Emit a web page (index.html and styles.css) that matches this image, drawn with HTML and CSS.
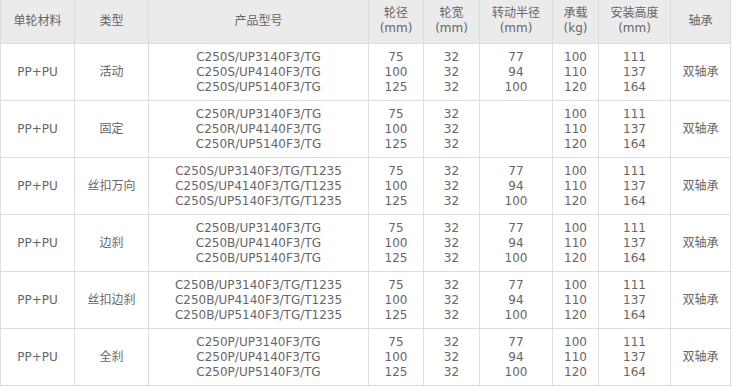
FILE: index.html
```html
<!DOCTYPE html>
<html lang="zh">
<head>
<meta charset="utf-8">
<link rel="stylesheet" href="styles.css">
</head>
<body>
<table class="spec">
  <colgroup>
    <col class="c1"><col class="c2"><col class="c3"><col class="c4"><col class="c5"><col class="c6"><col class="c7"><col class="c8"><col class="c9">
  </colgroup>
  <thead>
    <tr>
      <th>单轮材料</th><th>类型</th><th>产品型号</th><th>轮径<br>(mm)</th><th>轮宽<br>(mm)</th><th>转动半径<br>(mm)</th><th>承载<br>(kg)</th><th>安装高度<br>(mm)</th><th>轴承</th>
    </tr>
  </thead>
  <tbody>
    <tr>
      <td>PP+PU</td><td>活动</td><td>C250S/UP3140F3/TG<br>C250S/UP4140F3/TG<br>C250S/UP5140F3/TG</td><td>75<br>100<br>125</td><td>32<br>32<br>32</td><td>77<br>94<br>100</td><td>100<br>110<br>120</td><td>111<br>137<br>164</td><td>双轴承</td>
    </tr>
    <tr>
      <td>PP+PU</td><td>固定</td><td>C250R/UP3140F3/TG<br>C250R/UP4140F3/TG<br>C250R/UP5140F3/TG</td><td>75<br>100<br>125</td><td>32<br>32<br>32</td><td></td><td>100<br>110<br>120</td><td>111<br>137<br>164</td><td>双轴承</td>
    </tr>
    <tr>
      <td>PP+PU</td><td>丝扣万向</td><td>C250S/UP3140F3/TG/T1235<br>C250S/UP4140F3/TG/T1235<br>C250S/UP5140F3/TG/T1235</td><td>75<br>100<br>125</td><td>32<br>32<br>32</td><td>77<br>94<br>100</td><td>100<br>110<br>120</td><td>111<br>137<br>164</td><td>双轴承</td>
    </tr>
    <tr>
      <td>PP+PU</td><td>边刹</td><td>C250B/UP3140F3/TG<br>C250B/UP4140F3/TG<br>C250B/UP5140F3/TG</td><td>75<br>100<br>125</td><td>32<br>32<br>32</td><td>77<br>94<br>100</td><td>100<br>110<br>120</td><td>111<br>137<br>164</td><td>双轴承</td>
    </tr>
    <tr>
      <td>PP+PU</td><td>丝扣边刹</td><td>C250B/UP3140F3/TG/T1235<br>C250B/UP4140F3/TG/T1235<br>C250B/UP5140F3/TG/T1235</td><td>75<br>100<br>125</td><td>32<br>32<br>32</td><td>77<br>94<br>100</td><td>100<br>110<br>120</td><td>111<br>137<br>164</td><td>双轴承</td>
    </tr>
    <tr>
      <td>PP+PU</td><td>全刹</td><td>C250P/UP3140F3/TG<br>C250P/UP4140F3/TG<br>C250P/UP5140F3/TG</td><td>75<br>100<br>125</td><td>32<br>32<br>32</td><td>77<br>94<br>100</td><td>100<br>110<br>120</td><td>111<br>137<br>164</td><td>双轴承</td>
    </tr>
  </tbody>
</table>
</body>
</html>
```

FILE: styles.css
```css
html, body {
  margin: 0;
  padding: 0;
  background: #fff;
}
.spec {
  border-collapse: collapse;
  table-layout: fixed;
  width: 730px;
  font-family: "DejaVu Sans", "Noto Sans CJK SC", sans-serif;
  font-size: 12px;
  line-height: 15px;
  color: #666;
}
.c1 { width: 74px; }
.c2 { width: 74px; }
.c3 { width: 220px; }
.c4 { width: 55px; }
.c5 { width: 56px; }
.c6 { width: 73px; }
.c7 { width: 46px; }
.c8 { width: 72px; }
.c9 { width: 60px; }
.spec th,
.spec td {
  border: 1px solid #ddd;
  text-align: center;
  vertical-align: middle;
  font-weight: normal;
}
.spec th {
  background: #ebebeb;
  border-top: 0;
  padding: 6px 0 7px;
}
.spec td {
  padding: 6px 0 5px;
}
```
